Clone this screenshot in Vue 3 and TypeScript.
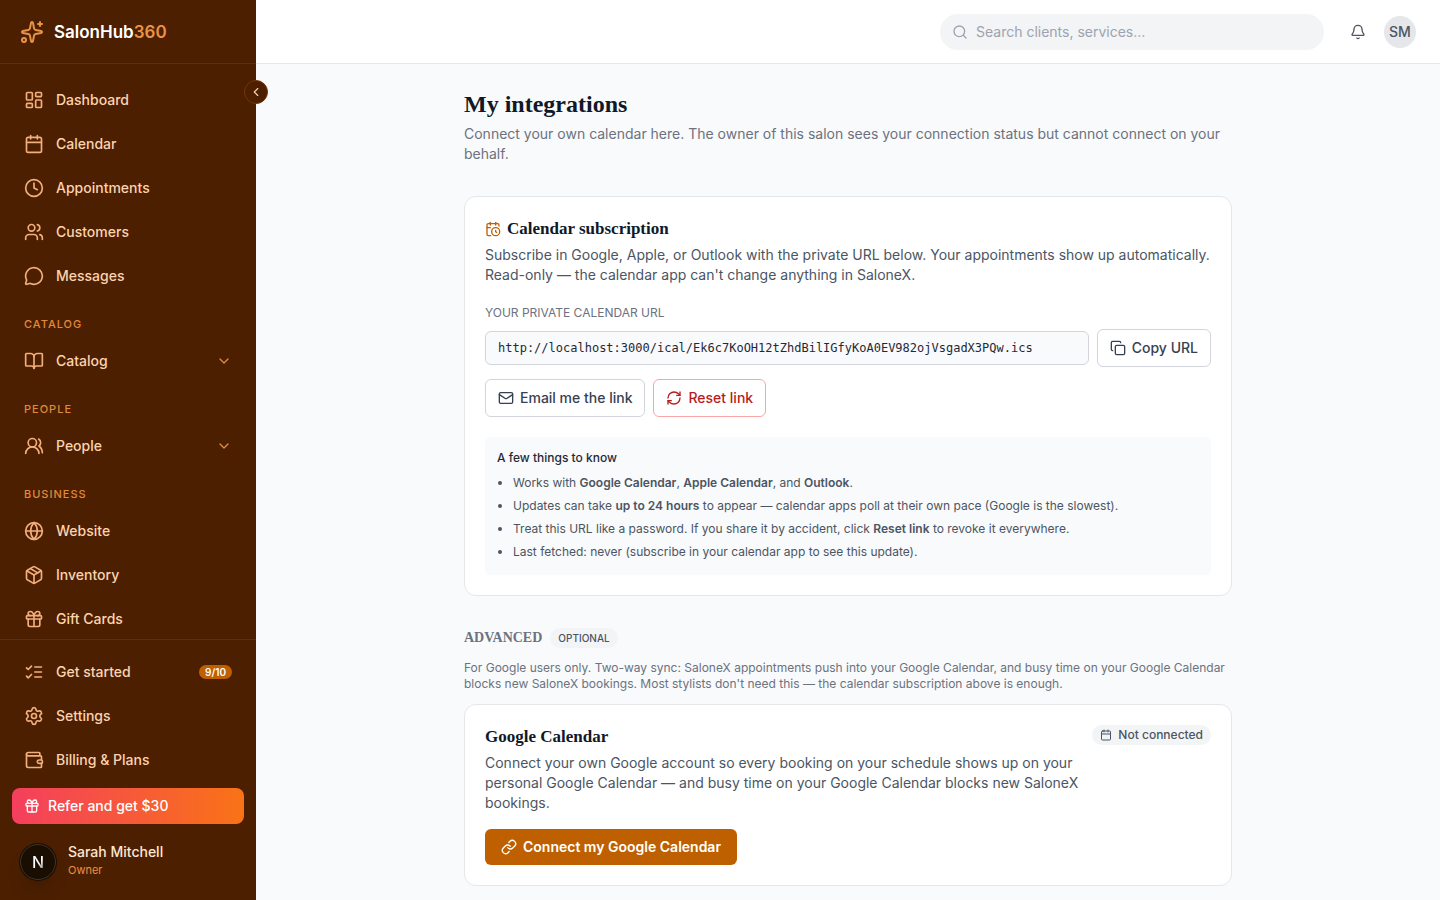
<script setup lang="ts">
import { h, ref, type FunctionalComponent } from 'vue'

const circle = (x: number, y: number, r: number): string =>
  `M${x - r} ${y}a${r} ${r} 0 1 0 ${r * 2} 0a${r} ${r} 0 1 0 ${-r * 2} 0`

const rect = (x: number, y: number, w: number, ht: number, r: number): string =>
  `M${x + r} ${y}h${w - 2 * r}a${r} ${r} 0 0 1 ${r} ${r}v${ht - 2 * r}a${r} ${r} 0 0 1 ${-r} ${r}` +
  `h${-(w - 2 * r)}a${r} ${r} 0 0 1 ${-r} ${-r}v${-(ht - 2 * r)}a${r} ${r} 0 0 1 ${r} ${-r}z`

const glyphs: Record<string, string[]> = {
  sparkles: [
    'M11.017 2.814a1 1 0 0 1 1.966 0l1.051 5.558a2 2 0 0 0 1.594 1.594l5.558 1.051a1 1 0 0 1 0 1.966l-5.558 1.051a2 2 0 0 0-1.594 1.594l-1.051 5.558a1 1 0 0 1-1.966 0l-1.051-5.558a2 2 0 0 0-1.594-1.594l-5.558-1.051a1 1 0 0 1 0-1.966l5.558-1.051a2 2 0 0 0 1.594-1.594z',
    'M20 2v4', 'M22 4h-4', circle(4, 20, 2),
  ],
  dashboard: [rect(3, 3, 7, 9, 1), rect(14, 3, 7, 5, 1), rect(14, 12, 7, 9, 1), rect(3, 16, 7, 5, 1)],
  calendar: ['M8 2v4', 'M16 2v4', rect(3, 4, 18, 18, 2), 'M3 10h18'],
  clock: [circle(12, 12, 10), 'M12 6v6l4 2'],
  users: [
    'M16 21v-2a4 4 0 0 0-4-4H6a4 4 0 0 0-4 4v2', circle(9, 7, 4),
    'M22 21v-2a4 4 0 0 0-3-3.87', 'M16 3.13a4 4 0 0 1 0 7.75',
  ],
  message: ['M2.992 16.342a2 2 0 0 1 .094 1.167l-1.065 3.29a1 1 0 0 0 1.236 1.168l3.413-.998a2 2 0 0 1 1.099.092 10 10 0 1 0-4.777-4.719'],
  book: [
    'M12 7v14',
    'M3 18a1 1 0 0 1-1-1V4a1 1 0 0 1 1-1h5a4 4 0 0 1 4 4 4 4 0 0 1 4-4h5a1 1 0 0 1 1 1v13a1 1 0 0 1-1 1h-6a3 3 0 0 0-3 3 3 3 0 0 0-3-3z',
  ],
  people: ['M18 21a8 8 0 0 0-16 0', circle(10, 8, 5), 'M22 20c0-3.37-2-6.5-4-8a5 5 0 0 0-.45-8.3'],
  globe: [circle(12, 12, 10), 'M12 2a14.5 14.5 0 0 0 0 20 14.5 14.5 0 0 0 0-20', 'M2 12h20'],
  package: [
    'M11 21.73a2 2 0 0 0 2 0l7-4A2 2 0 0 0 21 16V8a2 2 0 0 0-1-1.73l-7-4a2 2 0 0 0-2 0l-7 4A2 2 0 0 0 3 8v8a2 2 0 0 0 1 1.73z',
    'M12 22V12', 'M3.29 7 12 12 20.71 7', 'm7.5 4.27 9 5.15',
  ],
  gift: [
    rect(3, 8, 18, 4, 1), 'M12 8v13', 'M19 12v7a2 2 0 0 1-2 2H7a2 2 0 0 1-2-2v-7',
    'M7.5 8a2.5 2.5 0 0 1 0-5A4.8 8 0 0 1 12 8a4.8 8 0 0 1 4.5-5 2.5 2.5 0 0 1 0 5',
  ],
  checks: ['m3 17 2 2 4-4', 'm3 7 2 2 4-4', 'M13 6h8', 'M13 12h8', 'M13 18h8'],
  settings: [
    'M9.671 4.136a2.34 2.34 0 0 1 4.659 0 2.34 2.34 0 0 0 3.319 1.915 2.34 2.34 0 0 1 2.33 4.033 2.34 2.34 0 0 0 0 3.831 2.34 2.34 0 0 1-2.33 4.033 2.34 2.34 0 0 0-3.319 1.915 2.34 2.34 0 0 1-4.659 0 2.34 2.34 0 0 0-3.32-1.915 2.34 2.34 0 0 1-2.33-4.033 2.34 2.34 0 0 0 0-3.831A2.34 2.34 0 0 1 6.35 6.051a2.34 2.34 0 0 0 3.319-1.915',
    circle(12, 12, 3),
  ],
  wallet: [
    'M19 7V4a1 1 0 0 0-1-1H5a2 2 0 0 0 0 4h15a1 1 0 0 1 1 1v4h-3a2 2 0 0 0 0 4h3a1 1 0 0 0 1-1v-2a1 1 0 0 0-1-1',
    'M3 5v14a2 2 0 0 0 2 2h15a1 1 0 0 0 1-1v-4',
  ],
  search: [circle(11, 11, 8), 'm21 21-4.3-4.3'],
  bell: [
    'M10.268 21a2 2 0 0 0 3.464 0',
    'M3.262 15.326A1 1 0 0 0 4 17h16a1 1 0 0 0 .74-1.673C19.41 13.956 18 12.499 18 8A6 6 0 0 0 6 8c0 4.499-1.411 5.956-2.738 7.326',
  ],
  calendarClock: [
    'M16 14v2.2l1.6 1', 'M16 2v4', 'M21 7.5V6a2 2 0 0 0-2-2H5a2 2 0 0 0-2 2v14a2 2 0 0 0 2 2h3.5',
    'M3 10h5', 'M8 2v4', circle(16, 16, 6),
  ],
  copy: [rect(8, 8, 14, 14, 2), 'M4 16c-1.1 0-2-.9-2-2V4c0-1.1.9-2 2-2h10c1.1 0 2 .9 2 2'],
  mail: [rect(2, 4, 20, 16, 2), 'm22 7-8.991 5.727a2 2 0 0 1-2.009 0L2 7'],
  refresh: [
    'M3 12a9 9 0 0 1 9-9 9.75 9.75 0 0 1 6.74 2.74L21 8', 'M21 3v5h-5',
    'M21 12a9 9 0 0 1-9 9 9.75 9.75 0 0 1-6.74-2.74L3 16', 'M8 16H3v5',
  ],
  link: [
    'M10 13a5 5 0 0 0 7.54.54l3-3a5 5 0 0 0-7.07-7.07l-1.72 1.71',
    'M14 11a5 5 0 0 0-7.54-.54l-3 3a5 5 0 0 0 7.07 7.07l1.71-1.71',
  ],
  chevronDown: ['m6 9 6 6 6-6'],
  chevronLeft: ['m15 18-6-6 6-6'],
}

const Icon: FunctionalComponent<{ name: string; size?: number }> = (props) =>
  h(
    'svg',
    {
      width: props.size ?? 16,
      height: props.size ?? 16,
      viewBox: '0 0 24 24',
      fill: 'none',
      stroke: 'currentColor',
      'stroke-width': 2,
      'stroke-linecap': 'round',
      'stroke-linejoin': 'round',
      'aria-hidden': 'true',
    },
    glyphs[props.name].map((d) => h('path', { d })),
  )
Icon.props = ['name', 'size']

interface NavItem {
  label: string
  icon: string
  group?: boolean
  badge?: string
}

const sections: { title?: string; items: NavItem[] }[] = [
  {
    items: [
      { label: 'Dashboard', icon: 'dashboard' },
      { label: 'Calendar', icon: 'calendar' },
      { label: 'Appointments', icon: 'clock' },
      { label: 'Customers', icon: 'users' },
      { label: 'Messages', icon: 'message' },
    ],
  },
  { title: 'Catalog', items: [{ label: 'Catalog', icon: 'book', group: true }] },
  { title: 'People', items: [{ label: 'People', icon: 'people', group: true }] },
  {
    title: 'Business',
    items: [
      { label: 'Website', icon: 'globe' },
      { label: 'Inventory', icon: 'package' },
      { label: 'Gift Cards', icon: 'gift' },
    ],
  },
]

const footerItems: NavItem[] = [
  { label: 'Get started', icon: 'checks', badge: '9/10' },
  { label: 'Settings', icon: 'settings' },
  { label: 'Billing & Plans', icon: 'wallet' },
]

const query = ref('')
const feedUrl = ref('http://localhost:3000/ical/Ek6c7KoOH12tZhdBilIGfyKoA0EV982ojVsgadX3PQw.ics')
</script>

<template>
  <div class="app">
    <aside class="sidebar">
      <div class="brand">
        <Icon name="sparkles" :size="24" class="brand-icon" />
        <span class="brand-name">SalonHub<span class="brand-accent">360</span></span>
      </div>
      <button class="collapse" type="button" aria-label="Collapse sidebar">
        <Icon name="chevronLeft" :size="14" />
      </button>

      <nav class="nav" aria-label="Main">
        <template v-for="(section, i) in sections" :key="i">
          <h3 v-if="section.title" class="nav-title">{{ section.title }}</h3>
          <ul class="nav-list">
            <li v-for="item in section.items" :key="item.label">
              <button v-if="item.group" class="nav-item" type="button" aria-expanded="false">
                <Icon :name="item.icon" :size="20" class="nav-icon" />
                <span class="nav-label">{{ item.label }}</span>
                <Icon name="chevronDown" :size="16" class="nav-chevron" />
              </button>
              <a v-else class="nav-item" href="#">
                <Icon :name="item.icon" :size="20" class="nav-icon" />
                <span class="nav-label">{{ item.label }}</span>
              </a>
            </li>
          </ul>
        </template>
      </nav>

      <div class="side-footer">
        <ul class="nav-list">
          <li v-for="item in footerItems" :key="item.label">
            <a class="nav-item" href="#">
              <Icon :name="item.icon" :size="20" class="nav-icon" />
              <span class="nav-label">{{ item.label }}</span>
              <span v-if="item.badge" class="nav-badge">{{ item.badge }}</span>
            </a>
          </li>
        </ul>
        <a class="refer" href="#">
          <Icon name="gift" :size="16" />
          <span>Refer and get $30</span>
        </a>
        <div class="user">
          <span class="user-avatar"></span>
          <div class="user-text">
            <span class="user-name">Sarah Mitchell</span>
            <span class="user-role">Owner</span>
          </div>
        </div>
      </div>
    </aside>

    <div class="content">
      <header class="topbar">
        <label class="search">
          <Icon name="search" :size="16" />
          <input v-model="query" type="search" placeholder="Search clients, services…" aria-label="Search clients, services" />
        </label>
        <button class="bell" type="button" aria-label="Notifications"><Icon name="bell" :size="16" /></button>
        <button class="avatar" type="button" aria-label="Account menu">SM</button>
      </header>

      <main class="page">
        <div class="page-inner">
          <header class="page-head">
            <h1>My integrations</h1>
            <p>Connect your own calendar here. The owner of this salon sees your connection status but cannot connect on your behalf.</p>
          </header>

          <section class="card">
            <h2><Icon name="calendarClock" :size="16" class="title-icon" />Calendar subscription</h2>
            <p class="lead">Subscribe in Google, Apple, or Outlook with the private URL below. Your appointments show up automatically. Read-only — the calendar app can't change anything in SaloneX.</p>

            <label class="field-label" for="feed-url">Your private calendar URL</label>
            <div class="url-row">
              <input id="feed-url" class="url-input" type="text" readonly :value="feedUrl" />
              <button class="btn" type="button"><Icon name="copy" />Copy URL</button>
            </div>
            <div class="actions">
              <button class="btn" type="button"><Icon name="mail" />Email me the link</button>
              <button class="btn danger" type="button"><Icon name="refresh" />Reset link</button>
            </div>

            <div class="notes">
              <p class="notes-title">A few things to know</p>
              <ul>
                <li>Works with <strong>Google Calendar</strong>, <strong>Apple Calendar</strong>, and <strong>Outlook</strong>.</li>
                <li>Updates can take <strong>up to 24 hours</strong> to appear — calendar apps poll at their own pace (Google is the slowest).</li>
                <li>Treat this URL like a password. If you share it by accident, click <strong>Reset link</strong> to revoke it everywhere.</li>
                <li>Last fetched: never (subscribe in your calendar app to see this update).</li>
              </ul>
            </div>
          </section>

          <section class="advanced">
            <div class="advanced-head">
              <h2>Advanced</h2>
              <span class="tag">Optional</span>
            </div>
            <p class="advanced-text">For Google users only. Two-way sync: SaloneX appointments push into your Google Calendar, and busy time on your Google Calendar blocks new SaloneX bookings. Most stylists don't need this — the calendar subscription above is enough.</p>

            <div class="card">
              <div class="google-head">
                <div class="google-text">
                  <h2>Google Calendar</h2>
                  <p class="lead">Connect your own Google account so every booking on your schedule shows up on your personal Google Calendar — and busy time on your Google Calendar blocks new SaloneX bookings.</p>
                </div>
                <span class="status"><Icon name="calendar" :size="12" />Not connected</span>
              </div>
              <button class="btn-primary" type="button"><Icon name="link" />Connect my Google Calendar</button>
            </div>
          </section>
        </div>
      </main>
    </div>

    <button class="dev-badge" type="button" aria-label="Open developer tools">
      <span class="dev-letter">N</span>
    </button>
  </div>
</template>

<style>
body {
  margin: 0;
}
</style>

<style scoped>
.app {
  --sans: Inter, "Liberation Sans", sans-serif;
  --serif: "Liberation Serif", serif;
  display: flex;
  height: 100vh;
  overflow: hidden;
  background: #f9fafb;
  color: #111827;
  font: 400 14px/20px var(--sans);
}

.app *,
.app *::before {
  box-sizing: border-box;
}

h1, h2, h3, p, ul {
  margin: 0;
  padding: 0;
}

button, input {
  font: inherit;
}

button {
  cursor: pointer;
}

a {
  color: inherit;
  text-decoration: none;
}

svg {
  flex: none;
}

.sidebar {
  position: relative;
  z-index: 1;
  display: flex;
  flex: none;
  flex-direction: column;
  width: 256px;
  background: #4c1f00;
  color: #fcd3b0;
}

.brand {
  display: flex;
  flex: none;
  align-items: center;
  gap: 10px;
  height: 64px;
  padding: 0 20px;
  border-bottom: 1px solid #6b2c02;
}

.brand-icon,
.brand-accent {
  color: #e8924a;
}

.brand-name {
  color: #fff;
  font-size: 17px;
  font-weight: 600;
  line-height: 28px;
}

.collapse {
  position: absolute;
  top: 80px;
  right: -12px;
  display: grid;
  place-items: center;
  width: 24px;
  height: 24px;
  padding: 0;
  border: 1px solid #7c3403;
  border-radius: 50%;
  background: #4c1f00;
  color: #fcd3b0;
}

.nav {
  flex: 1;
  min-height: 0;
  overflow: hidden;
  padding: 16px 12px;
}

.nav-title {
  padding: 20px 12px 8px;
  color: #e08a3e;
  font-size: 11px;
  font-weight: 500;
  line-height: 17px;
  letter-spacing: 1px;
  text-transform: uppercase;
}

.nav-list {
  display: flex;
  flex-direction: column;
  gap: 4px;
  list-style: none;
}

.nav-item {
  display: flex;
  align-items: center;
  gap: 12px;
  width: 100%;
  height: 40px;
  padding: 0 12px;
  border: 0;
  background: none;
  color: inherit;
  font-weight: 500;
  text-align: left;
}

.nav-icon {
  color: #f2ae7c;
}

.nav-label {
  flex: 1;
}

.nav-chevron {
  color: #e08a3e;
}

.nav-badge {
  padding: 0 6px;
  border-radius: 7px;
  background: #bf6000;
  color: #fff;
  font-size: 10px;
  font-weight: 600;
  line-height: 14px;
}

.side-footer {
  flex: none;
  padding: 12px;
  border-top: 1px solid #6b2c02;
}

.refer {
  display: flex;
  align-items: center;
  gap: 8px;
  height: 36px;
  margin: 8px 0;
  padding: 0 12px;
  border-radius: 8px;
  background: linear-gradient(90deg, #f43f5e, #f97316);
  color: #fff;
  font-weight: 500;
}

.user {
  display: flex;
  align-items: center;
  gap: 12px;
  padding: 10px 12px;
}

.user-avatar {
  width: 32px;
  height: 32px;
  border-radius: 50%;
  background: #1a0e02;
}

.user-text {
  display: flex;
  flex-direction: column;
  padding-bottom: 0;
}

.user-name {
  color: #fde6d2;
  font-weight: 500;
}

.user-role {
  color: #e8924a;
  font-size: 11px;
  line-height: 16px;
}

/* Floating developer button, laid over the user row */
.dev-badge {
  position: absolute;
  bottom: 20px;
  left: 20px;
  z-index: 2;
  display: grid;
  place-items: center;
  width: 36px;
  height: 36px;
  padding: 0;
  border: 1px solid #3d352c;
  border-radius: 50%;
  background: #1a0e02;
  box-shadow: 0 0 0 1px #1a0e02, 0 12px 20px -6px rgba(0, 0, 0, 0.2);
}

.dev-letter {
  background: linear-gradient(135deg, #fff 55%, #6b645c);
  background-clip: text;
  color: transparent;
  font-size: 16px;
  font-weight: 500;
  line-height: 20px;
}

.app {
  position: relative;
}

.content {
  display: flex;
  flex: 1;
  flex-direction: column;
  min-width: 0;
}

.topbar {
  display: flex;
  flex: none;
  align-items: center;
  justify-content: flex-end;
  height: 64px;
  padding: 0 24px;
  border-bottom: 1px solid #e5e7eb;
  background: #fff;
}

.search {
  display: flex;
  flex: 0 1 384px;
  align-items: center;
  gap: 8px;
  height: 36px;
  margin-right: 16px;
  padding: 0 12px;
  border-radius: 18px;
  background: #f3f4f6;
  color: #9ca3af;
}

.search input {
  flex: 1;
  min-width: 0;
  padding: 0;
  border: 0;
  outline: 0;
  background: none;
  color: #111827;
}

.search input::placeholder {
  color: #9ca3af;
}

.bell {
  display: grid;
  place-items: center;
  width: 36px;
  height: 36px;
  margin-right: 8px;
  padding: 0;
  border: 0;
  background: none;
  color: #4b5563;
}

.avatar {
  width: 32px;
  height: 32px;
  padding: 0;
  border: 0;
  border-radius: 50%;
  background: #e5e7eb;
  color: #4b5563;
  font-weight: 500;
}

.page {
  flex: 1;
  min-height: 0;
  overflow: hidden;
  padding: 24px;
}

.page-inner {
  max-width: 768px;
  margin: 0 auto;
}

h1, h2 {
  font-family: var(--serif);
  font-weight: 700;
}

h1 {
  font-size: 24px;
  line-height: 32px;
}

.page-head p {
  margin-top: 4px;
  color: #6b7280;
}

.card {
  padding: 20px;
  border: 1px solid #e5e7eb;
  border-radius: 12px;
  background: #fff;
}

.page-head + .card {
  margin-top: 32px;
}

.card h2 {
  display: flex;
  align-items: center;
  gap: 6px;
  font-size: 17px;
  line-height: 24px;
}

.title-icon {
  color: #bf6000;
}

.lead {
  margin-top: 4px;
  color: #4b5563;
}

.field-label {
  display: block;
  margin: 20px 0 8px;
  color: #6b7280;
  font-size: 12px;
  line-height: 16px;
  text-transform: uppercase;
}

.url-row,
.actions {
  display: flex;
  align-items: center;
  gap: 8px;
}

.actions {
  margin: 12px 0 20px;
}

.url-input {
  flex: 1;
  min-width: 0;
  height: 34px;
  padding: 0 12px;
  border: 1px solid #d1d5db;
  border-radius: 6px;
  background: #f9fafb;
  color: #1f2937;
  font: 400 12px/16px "DejaVu Sans Mono", monospace;
}

.btn,
.btn-primary {
  display: inline-flex;
  align-items: center;
  gap: 6px;
  border: 1px solid #d1d5db;
  border-radius: 6px;
  font-weight: 500;
}

.btn {
  height: 38px;
  padding: 0 12px;
  background: #fff;
  color: #374151;
}

.btn.danger {
  border-color: #fca5a5;
  color: #b91c1c;
}

.btn-primary {
  height: 36px;
  margin-top: 16px;
  padding: 0 16px;
  border: 0;
  background: #bf6000;
  color: #fff;
  font-weight: 600;
}

.notes {
  padding: 12px 12px 13px;
  border-radius: 6px;
  background: #f9fafb;
  color: #4b5563;
  font-size: 12px;
  line-height: 20px;
}

.notes-title {
  margin-bottom: 6px;
  color: #1f2937;
  font-weight: 500;
  line-height: 18px;
}

.notes ul {
  display: flex;
  flex-direction: column;
  gap: 3px;
  padding-left: 16px;
}

.notes strong {
  font-weight: 600;
}

.advanced {
  margin-top: 32px;
}

.advanced-head {
  display: flex;
  align-items: center;
  gap: 8px;
}

.advanced-head h2 {
  color: #6b7280;
  font-size: 14px;
  line-height: 20px;
  text-transform: uppercase;
}

.tag {
  padding: 0 8px;
  border-radius: 10px;
  background: #f3f4f6;
  color: #4b5563;
  font-size: 10px;
  font-weight: 500;
  line-height: 20px;
  text-transform: uppercase;
}

.advanced-text {
  margin: 12px 0;
  color: #6b7280;
  font-size: 12px;
  line-height: 16px;
}

.google-head {
  display: flex;
  align-items: flex-start;
  gap: 12px;
}

.google-text {
  flex: 1;
}

.status {
  display: inline-flex;
  align-items: center;
  gap: 6px;
  padding: 0 8px;
  border-radius: 10px;
  background: #f3f4f6;
  color: #4b5563;
  font-size: 12px;
  font-weight: 500;
  line-height: 20px;
}
</style>
